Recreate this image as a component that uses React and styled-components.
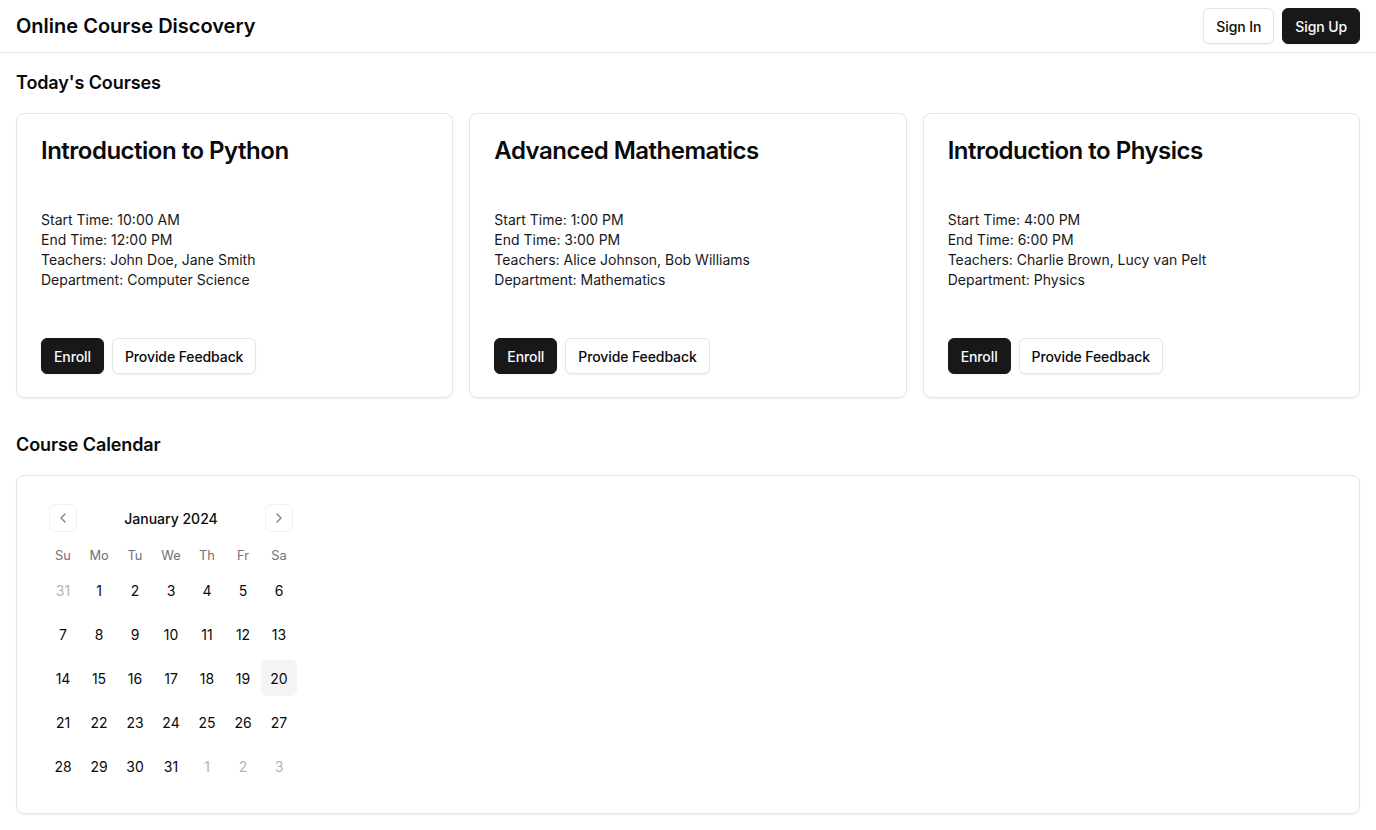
import React from 'react';
import styled, { createGlobalStyle } from 'styled-components';
import { ChevronLeft, ChevronRight } from 'lucide-react';

const GlobalStyle = createGlobalStyle`
  * { box-sizing: border-box; }
  body {
    margin: 0;
    background: #ffffff;
    color: #09090b;
    font-family: Inter, "Noto Sans", sans-serif;
  }
`;

const Page = styled.div`
  min-height: 100vh;
  display: flex;
  flex-direction: column;
`;

const TopBar = styled.header`
  display: flex;
  align-items: center;
  justify-content: space-between;
  height: 53px;
  padding: 0 16px;
  border-bottom: 1px solid #e4e4e7;
`;

const Brand = styled.h1`
  margin: 0;
  font-size: 20px;
  line-height: 28px;
  font-weight: 600;
`;

const Actions = styled.div`
  display: flex;
  gap: 8px;
`;

const Button = styled.button`
  height: 36px;
  padding: 0 12px;
  border-radius: 6px;
  font-family: inherit;
  font-size: 14px;
  font-weight: 500;
  letter-spacing: -0.1px;
  cursor: pointer;
  border: 1px solid ${p => (p.$primary ? '#18181b' : '#e4e4e7')};
  background: ${p => (p.$primary ? '#18181b' : '#ffffff')};
  color: ${p => (p.$primary ? '#fafafa' : '#09090b')};
  box-shadow: 0 1px 2px rgba(0, 0, 0, 0.05);
`;

const Main = styled.main`
  padding: 16px;
  display: flex;
  flex-direction: column;
  gap: 33px;
`;

const Section = styled.section`
  display: flex;
  flex-direction: column;
  gap: 16px;
`;

const SectionTitle = styled.h2`
  margin: 0;
  font-size: 18px;
  line-height: 28px;
  font-weight: 600;
  letter-spacing: -0.1px;
`;

const CourseGrid = styled.div`
  display: grid;
  grid-template-columns: repeat(3, 1fr);
  gap: 16px;
`;

const Card = styled.div`
  border: 1px solid #e4e4e7;
  border-radius: 8px;
  background: #ffffff;
  box-shadow: 0 1px 2px rgba(0, 0, 0, 0.05);
`;

const CourseCard = styled(Card)`
  padding: 25px 24px 23px;
  display: flex;
  flex-direction: column;
`;

const CourseTitle = styled.h3`
  margin: 0;
  font-size: 24px;
  line-height: 24px;
  font-weight: 600;
  letter-spacing: -0.5px;
`;

const Details = styled.div`
  margin-top: 47px;
  font-size: 14px;
  line-height: 20px;
  color: #18181b;
`;

const CardFooter = styled.div`
  margin-top: 48px;
  display: flex;
  gap: 8px;
`;

const CalendarCard = styled(Card)`
  padding: 16px 16px 17px;
`;

const Calendar = styled.div`
  padding: 12px;
  width: 276px;
`;

const Caption = styled.div`
  position: relative;
  height: 28px;
  display: flex;
  align-items: center;
  justify-content: center;
  font-size: 14px;
  font-weight: 500;
  margin-bottom: 16px;
`;

const NavButton = styled.button`
  position: absolute;
  top: 0;
  ${p => (p.$side === 'left' ? 'left: 4px;' : 'right: 4px;')}
  width: 28px;
  height: 28px;
  padding: 0;
  display: flex;
  align-items: center;
  justify-content: center;
  border: 1px solid #e4e4e7;
  border-radius: 6px;
  background: #ffffff;
  color: #09090b;
  opacity: 0.5;
`;

const WeekRow = styled.div`
  display: grid;
  grid-template-columns: repeat(7, 36px);
  margin-top: ${p => (p.$head ? 0 : 8)}px;
`;

const WeekDay = styled.div`
  height: 16px;
  text-align: center;
  font-size: 12.8px;
  line-height: 16px;
  color: #71717a;
`;

const Day = styled.div`
  height: 36px;
  display: flex;
  align-items: center;
  justify-content: center;
  border-radius: 6px;
  font-size: 14px;
  color: ${p => (p.$outside ? '#b4b4b9' : '#09090b')};
  background: ${p => (p.$today ? '#f4f4f5' : 'transparent')};
`;

const courses = [
  {
    title: 'Introduction to Python',
    start: '10:00 AM',
    end: '12:00 PM',
    teachers: 'John Doe, Jane Smith',
    department: 'Computer Science',
  },
  {
    title: 'Advanced Mathematics',
    start: '1:00 PM',
    end: '3:00 PM',
    teachers: 'Alice Johnson, Bob Williams',
    department: 'Mathematics',
  },
  {
    title: 'Introduction to Physics',
    start: '4:00 PM',
    end: '6:00 PM',
    teachers: 'Charlie Brown, Lucy van Pelt',
    department: 'Physics',
  },
];

const weekdays = ['Su', 'Mo', 'Tu', 'We', 'Th', 'Fr', 'Sa'];

// January 2024 starts on a Monday
const buildWeeks = () => {
  const cells = [{ n: 31, outside: true }];
  for (let i = 1; i <= 31; i++) cells.push({ n: i });
  for (let i = 1; i <= 3; i++) cells.push({ n: i, outside: true });
  const weeks = [];
  for (let i = 0; i < cells.length; i += 7) weeks.push(cells.slice(i, i + 7));
  return weeks;
};

export default function App() {
  const weeks = buildWeeks();
  return (
    <Page>
      <GlobalStyle />
      <TopBar>
        <Brand>Online Course Discovery</Brand>
        <Actions>
          <Button>Sign In</Button>
          <Button $primary>Sign Up</Button>
        </Actions>
      </TopBar>
      <Main>
        <Section>
          <SectionTitle>Today's Courses</SectionTitle>
          <CourseGrid>
            {courses.map(c => (
              <CourseCard key={c.title}>
                <CourseTitle>{c.title}</CourseTitle>
                <Details>
                  <div>Start Time: {c.start}</div>
                  <div>End Time: {c.end}</div>
                  <div>Teachers: {c.teachers}</div>
                  <div>Department: {c.department}</div>
                </Details>
                <CardFooter>
                  <Button $primary>Enroll</Button>
                  <Button>Provide Feedback</Button>
                </CardFooter>
              </CourseCard>
            ))}
          </CourseGrid>
        </Section>
        <Section>
          <SectionTitle>Course Calendar</SectionTitle>
          <CalendarCard>
            <Calendar>
              <Caption>
                <NavButton $side="left"><ChevronLeft size={16} /></NavButton>
                January 2024
                <NavButton $side="right"><ChevronRight size={16} /></NavButton>
              </Caption>
              <WeekRow $head>
                {weekdays.map(d => <WeekDay key={d}>{d}</WeekDay>)}
              </WeekRow>
              {weeks.map((w, i) => (
                <WeekRow key={i}>
                  {w.map((d, j) => (
                    <Day key={j} $outside={d.outside} $today={!d.outside && d.n === 20}>
                      {d.n}
                    </Day>
                  ))}
                </WeekRow>
              ))}
            </Calendar>
          </CalendarCard>
        </Section>
      </Main>
    </Page>
  );
}
